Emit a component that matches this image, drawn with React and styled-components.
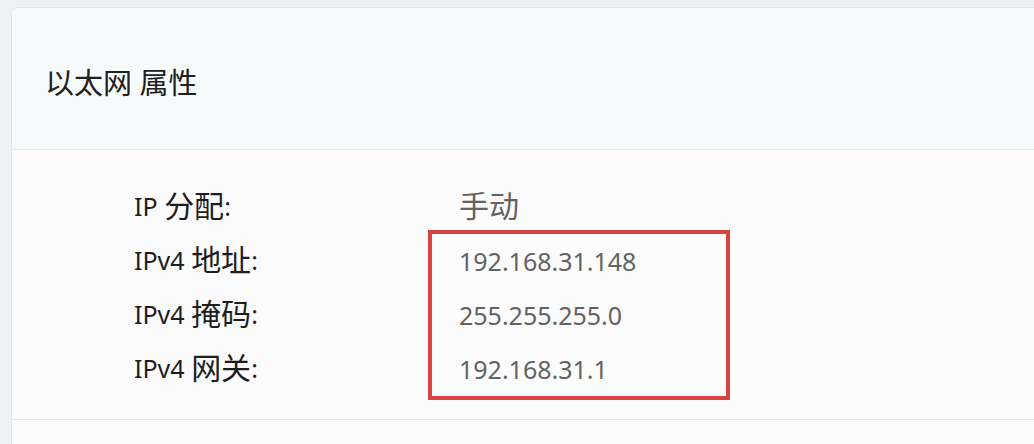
import React from 'react';
import styled, { createGlobalStyle } from 'styled-components';

const GlobalStyle = createGlobalStyle`
  html, body {
    margin: 0;
    padding: 0;
    background: #eef2f5;
    overflow: hidden;
  }
  body {
    font-family: "Noto Sans", "Noto Sans CJK SC", sans-serif;
  }
`

const Page = styled.div`
  width: 1034px;
  height: 444px;
  padding: 7px 0 0 11px;
  box-sizing: border-box;
  overflow: hidden;
`

const Card = styled.div`
  width: 1060px;
  border: 1px solid #e2e6e9;
  border-radius: 7px 0 0 0;
  background: #fbfbfc;
  overflow: hidden;
`

const Header = styled.div`
  height: 142px;
  display: flex;
  align-items: center;
  padding: 8px 0 0 33px;
  box-sizing: border-box;
  background: #f7fafb;
  border-bottom: 1px solid #e6e9eb;
`

const Title = styled.h1`
  margin: 0;
  font-size: 29px;
  font-weight: 400;
  color: #202020;
  line-height: 1;
`

const Body = styled.div`
  display: grid;
  grid-template-columns: 325px auto;
  padding: 29px 0 24px 122px;
  border-bottom: 1px solid #e3e6e8;
`

const Column = styled.div`
  display: flex;
  flex-direction: column;
`

const Row = styled.div`
  height: 54px;
  display: flex;
  align-items: center;
  font-size: 25px;
  line-height: 1;
  white-space: pre;
  color: ${p => (p.$muted ? '#636363' : '#1e1e1e')};
`

const Cjk = styled.span`
  font-size: 30px;
`

const Highlight = styled.div`
  display: flex;
  flex-direction: column;
  box-sizing: border-box;
  width: 302px;
  margin: -3px 0 -5px -31px;
  padding-left: 27px;
  border: 4px solid #d8443f;
`

const Footer = styled.div`
  height: 40px;
  background: #fbfbfc;
`

const labels = [
  ['IP', '分配'],
  ['IPv4', '地址'],
  ['IPv4', '掩码'],
  ['IPv4', '网关'],
];
const addresses = ['192.168.31.148', '255.255.255.0', '192.168.31.1'];

export default function App() {
  return (
    <Page>
      <GlobalStyle />
      <Card>
        <Header>
          <Title>以太网 属性</Title>
        </Header>
        <Body>
          <Column>
            {labels.map(([latin, cjk]) => (
              <Row key={cjk}>
                {latin} <Cjk>{cjk}</Cjk>:
              </Row>
            ))}
          </Column>
          <Column>
            <Row $muted><Cjk>手动</Cjk></Row>
            <Highlight>
              {addresses.map(addr => (
                <Row $muted key={addr}>{addr}</Row>
              ))}
            </Highlight>
          </Column>
        </Body>
        <Footer />
      </Card>
    </Page>
  );
}
